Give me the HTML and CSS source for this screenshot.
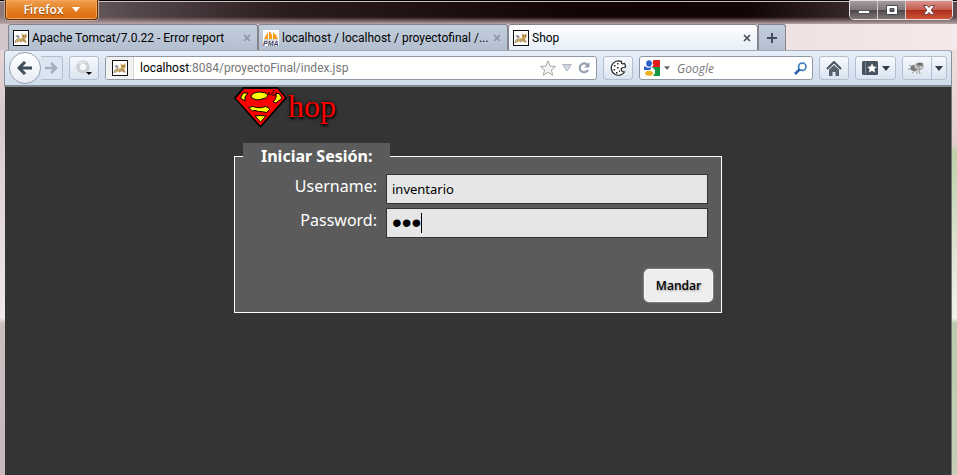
FILE: index.html
```html
<!DOCTYPE html>
<html lang="es">
<head>
<meta charset="utf-8">
<title>Shop</title>
<link rel="stylesheet" href="styles.css">
</head>
<body>
<svg class="defs" aria-hidden="true">
  <symbol id="cat" viewBox="0 0 16 16">
    <rect x=".5" y=".5" width="15" height="15" fill="#fff" stroke="#111"/>
    <path d="M2 6l3-1 2 2-2 1z" fill="#8d8d8d"/>
    <path d="M8.500 3l1.500 1.500h2L13.500 3v4.500L12 9l2 3.500h-2.500L9 11l-2.500.5-4 1.500L4 10l2.500-1.500L9 8z" fill="#cba55a"/>
    <path d="M2 13l1-3 3-2M7 12l2-1M10 9l2 3" fill="none" stroke="#8c8170"/>
    <path d="M10 6h1M12 6h1" stroke="#5b4520"/>
  </symbol>
  <symbol id="close" viewBox="0 0 8 8">
    <path d="M1 1l6 6M7 1L1 7" stroke="currentColor" stroke-width="1.7"/>
  </symbol>
  <symbol id="down" viewBox="0 0 8 5"><path d="M0 0h8L4 5z" fill="currentColor"/></symbol>
</svg>
<header class="browser">
  <div class="titlebar">
    <button class="firefox" type="button">Firefox <svg width="8" height="5"><use href="#down"/></svg></button>
    <div class="controls">
      <button type="button" aria-label="Minimizar"><svg width="12" height="12" viewBox="0 0 12 12"><path d="M.5 6.500h11v3H.5z" fill="#fff" stroke="#555"/></svg></button>
      <button type="button" aria-label="Maximizar"><svg width="12" height="12" viewBox="0 0 12 12"><path d="M.5 1.500h11v9H.5zM4 4.500v3h4v-3z" fill="#fff" stroke="#4b4b55" fill-rule="evenodd"/></svg></button>
      <button class="shut" type="button" aria-label="Cerrar"><svg width="12" height="12" viewBox="0 0 12 12"><path d="M.5 1.500h3.500l2 2 2-2h3.500L8.200 6l3.300 4.500H8l-2-2-2 2H.5L3.800 6z" fill="#fff" stroke="#6d4448"/></svg></button>
    </div>
  </div>
  <nav class="tabs">
    <a class="tab" href="#tomcat"><svg width="16" height="16"><use href="#cat"/></svg><span>Apache Tomcat/7.0.22 - Error report</span><svg class="x" width="8" height="8"><use href="#close"/></svg></a>
    <a class="tab" href="#pma"><svg width="16" height="16" viewBox="0 0 16 16"><path fill="#fff" d="M0 0h16v16H0z"/><path d="M1 9l4-7v7zM6 9V1q4 3 3 8zM10 9V2q4 3 5 7z" fill="#f69a18"/><path d="M1 10h14" stroke="#aab"/><text x="0" y="16" class="pma">PMA</text></svg><span>localhost / localhost / proyectofinal /...</span><svg class="x" width="8" height="8"><use href="#close"/></svg></a>
    <a class="tab active" href="#shop"><svg width="16" height="16"><use href="#cat"/></svg><span>Shop</span><svg class="x" width="8" height="8"><use href="#close"/></svg></a>
    <button class="newtab" type="button" aria-label="Nueva pestaña"><svg width="12" height="12" viewBox="0 0 12 12"><path d="M6 1v10M1 6h10" stroke="#3e4c5c" stroke-width="2"/></svg></button>
  </nav>
  <div class="toolbar">
    <div class="history">
      <button class="back" type="button" aria-label="Atrás"><svg width="16" height="14" viewBox="0 0 16 14"><path d="M8 1L2 7l6 6M3 7h12" fill="none" stroke="#3f4c5a" stroke-width="3"/></svg></button>
      <button class="forward" type="button" aria-label="Adelante"><svg width="13" height="12" viewBox="0 0 13 12"><path d="M6 1l5 5-5 5M0 6h10" fill="none" stroke="#a3b0c0" stroke-width="2.600"/></svg></button>
    </div>
    <button class="tool" type="button" aria-label="Complemento"><svg width="18" height="18" viewBox="0 0 18 18"><circle cx="8" cy="8" r="5" fill="#f4f6f8" stroke="#cdd1d6" stroke-width="3.500"/><path d="M4 5q3-3 6-1" fill="none" stroke="#e6e9ec" stroke-width="2"/><path d="M11 13h6l-3 3z" fill="#000"/></svg></button>
    <div class="urlbar">
      <span class="identity"><svg width="16" height="16"><use href="#cat"/></svg></span>
      <span class="url"><b>localhost</b>:8084/proyectoFinal/index.jsp</span>
      <svg width="16" height="16" viewBox="0 0 16 16"><path d="M8 .8l2.100 5.200 5.500.4-4.200 3.500 1.400 5.500L8 12.400l-4.800 3 1.400-5.500L.4 6.400 5.900 6z" fill="#f2f2f2" stroke="#a8a8a8"/></svg>
      <svg width="10" height="8" viewBox="0 0 10 8"><path d="M.7.700h8.600L5 7z" fill="#d5dbe3" stroke="#a5afbb"/></svg>
      <svg width="12" height="12" viewBox="0 0 12 12"><path d="M9.500 3A4.400 4.400 0 1 0 10 8" fill="none" stroke="#94a0ae" stroke-width="2.200"/><path d="M6 5.500h5.500V0z" fill="#94a0ae"/></svg>
    </div>
    <button class="tool" type="button" aria-label="Cookies"><svg width="17" height="17" viewBox="0 0 17 17"><path d="M11.500 1.500A7.200 7.200 0 1 0 14.500 12q-3 0-3.500-2.500.5-2 2.500-2l2-.5q0-2-1-3.500l-2 .5q-1.500-.5-1-2.500z" fill="#fff" stroke="#222" stroke-width="1.200"/><path d="M7 3h1.500v1.500H7zM4 5h1.500v1.500H4zM7 7h1.500v1.500H7zM3.500 9H5v1.500H3.500zM6 12h1.500v1.500H6zM9 10.500h1V12H9z" fill="#222"/></svg></button>
    <label class="search">
      <svg width="16" height="16" viewBox="0 0 16 16"><path fill="#fff" d="M0 0h8v16H0z"/><path fill="#e21b1b" d="M8 0h8v7H8z"/><path fill="#159947" d="M8 7h8v9H8z"/><path d="M8 0h1.500l-1 3 1 2-1.500 2 3 3v3l-2 3H8z" fill="#fff"/><ellipse cx="5" cy="3.500" rx="2.800" ry="3.300" fill="#2c62c8"/><path d="M0 6l4 2 4-1-2 3H0z" fill="#2c62c8"/><ellipse cx="5" cy="13.300" rx="4" ry="2.500" fill="#eeb321"/></svg>
      <svg class="small" width="6" height="4"><use href="#down"/></svg>
      <input type="text" placeholder="Google" aria-label="Buscar con Google">
      <svg width="13" height="13" viewBox="0 0 13 13"><circle cx="8.300" cy="4.700" r="3.700" fill="#fff" stroke="#3479c2" stroke-width="1.600"/><path d="M5.500 7.500L1 12" stroke="#285fae" stroke-width="2.500"/></svg>
    </label>
    <button class="tool" type="button" aria-label="Inicio"><svg width="16" height="15" viewBox="0 0 16 15"><path d="M1 8l7-7 7 7" fill="none" stroke="#46535f" stroke-width="2"/><path d="M3 8.500L8 4l5 4.500V15H9.500v-4h-3v4H3z" fill="#56636f"/></svg></button>
    <button class="tool wide" type="button" aria-label="Marcadores"><svg width="16" height="14" viewBox="0 0 16 14"><rect width="16" height="14" rx="1.500" fill="#46535f"/><path d="M3.500 1v12" stroke="#7c8995"/><path d="M10 2.500l1.500 3 3.300.4-2.400 2.200.6 3.400-3-1.700-3 1.700.6-3.400-2.400-2.200 3.300-.4z" fill="#fff"/></svg><svg width="8" height="5"><use href="#down"/></svg></button>
    <div class="split">
      <button type="button" aria-label="Firebug"><svg width="18" height="14" viewBox="0 0 18 14"><path d="M1 4l5 3M0 8h6M4 12l4-3M9 13V9M12 13l-1-4" stroke="#999" fill="none"/><ellipse cx="6" cy="7" rx="3.500" ry="3" fill="#777"/><ellipse cx="11" cy="5.500" rx="5" ry="3.700" fill="#a8a8a8"/><ellipse cx="12" cy="3" rx="3" ry="1.500" fill="#6f6f6f"/><path d="M6 3l4 5M12 6l4 1" stroke="#ddd"/></svg></button>
      <button type="button" aria-label="Opciones"><svg width="8" height="5"><use href="#down"/></svg></button>
    </div>
  </div>
</header>
<main class="page">
  <div class="content">
    <h1 class="logo">
      <svg width="54" height="42" viewBox="0 0 54 42" role="img" aria-label="S">
        <path d="M9 0h35l9 11-26.500 30L0 11z" fill="#000"/>
        <path d="M10 2h33.500l7.500 8.800-24.500 27.700L2 11.200z" fill="#f00"/>
        <path d="M9 6h5l-3 4v4L6.500 11z" fill="#ff0" stroke="#000"/>
        <path d="M17 9q2-4 9-4 6 0 8 3-1 4-6 4-4 2-8 0-3-1-3-3z" fill="#ff0" stroke="#000"/>
        <path d="M35 8V5M36 8q4-2 4-5M38 8h5l-1-3" fill="none" stroke="#000"/>
        <path d="M42 6.500h3l3 4.500-6 5-3-1q4-3 3-8.500z" fill="#ff0" stroke="#000"/>
        <path d="M14.500 20.500q5-2 8 0 5 1 9-1 4 1 4 3l-3 3q-4-1-8-1-4-2-6-.5z" fill="#ff0" stroke="#000"/>
        <path d="M21 29q5-1 11 0l-5.500 6z" fill="#ff0" stroke="#000"/>
      </svg><span>hop</span>
    </h1>
    <form>
      <fieldset>
        <legend>Iniciar Sesión:</legend>
        <div class="fields">
          <label for="user">Username:</label>
          <input id="user" type="text" value="inventario">
          <label for="pass">Password:</label>
          <div class="secret"><input id="pass" type="password" value="abc"><span class="caret"></span></div>
        </div>
        <div class="actions"><button class="send" type="button">Mandar</button></div>
      </fieldset>
    </form>
  </div>
</main>
</body>
</html>
```
FILE: styles.css
```css
* { box-sizing: border-box; }
body {
  margin: 0;
  min-height: 100vh;
  display: flex;
  flex-direction: column;
  font: 12px Roboto, sans-serif;
  color: #000;
  background:
    linear-gradient(#eee0e2, #d9c8cb 25%, #efe9ec 67%, #cdbdbf 68%, #c9b9bc) left / 50% 100% no-repeat,
    linear-gradient(#f5e6e6, #e7cdd0 30%, #bfd0a9 32%, #f0f3ee 67%, #bccbab 68%, #c4cfb4) right / 50% 100% no-repeat;
}
button, input { font: inherit; color: inherit; margin: 0; }
button { padding: 0; display: flex; align-items: center; justify-content: center; }
svg { flex: none; }
.defs { position: absolute; width: 0; height: 0; }

.titlebar {
  height: 24px;
  padding: 0 4px 0 5px;
  display: flex;
  justify-content: space-between;
  align-items: flex-start;
  background: linear-gradient(#000 1px, #cdbfc2 1px, #cdbfc2 2px, transparent 2px, transparent 17px, #b9a5a8 24px),
    linear-gradient(90deg, #8b7b7d, #54474a 14%, #2b1c1d 30%, #130406 60%, #120506 78%, #5b4b4d);
}
.firefox {
  width: 93px;
  height: 20px;
  gap: 8px;
  color: #fff;
  font-family: "Open Sans", sans-serif;
  font-weight: 600;
  text-shadow: 0 1px 1px #8a4303;
  border: 1px solid #5c3314;
  border-top: 0;
  border-radius: 0 0 4px 4px;
  box-shadow: 0 0 1px 1px #c9a68c, inset 0 0 0 1px #f5a55c;
  background: linear-gradient(#f0a050, #e27b1e 55%, #da6c12);
}
.controls {
  display: flex;
  height: 20px;
  border: 1px solid #eadfe0;
  border-radius: 0 0 5px 5px;
  overflow: hidden;
}
.controls button {
  width: 28px;
  border: 0;
  border-right: 1px solid #d7cccd;
  background: linear-gradient(#a69b9c, #80777a 48%, #4e4648 50%, #807678);
}
.controls .shut { width: 46px; border: 0; background: linear-gradient(#d9948b, #c65c4f 48%, #a82a18 50%, #cf5639); }

.tabs {
  height: 26px;
  padding-left: 8px;
  display: flex;
  background: linear-gradient(90deg, #d2c6ca, #eadddf 70%, #f6e9e9);
}
.tab {
  flex: 0 1 250px;
  min-width: 0;
  padding: 0 6px 0 4px;
  display: flex;
  align-items: center;
  gap: 3px;
  color: #000;
  text-decoration: none;
  white-space: nowrap;
  border: 1px solid #85838d;
  border-bottom: 0;
  border-radius: 3px 3px 0 0;
  background: linear-gradient(#c4cfdd, #b3bfd0);
}
.tab span { flex: 1; }
.tab .x { color: #8b96a5; }
.tab.active { background: linear-gradient(#fff, #e6eef8); }
.tab.active .x { color: #4b4f55; }
.pma { font: italic bold 7px "Liberation Sans", sans-serif; fill: #3d3d66; }
.newtab {
  width: 28px;
  border: 1px solid #85838d;
  border-bottom: 0;
  border-radius: 0 3px 0 0;
  background: linear-gradient(#c4cfdd, #b3bfd0);
}

.toolbar {
  height: 37px;
  margin: 0 5px 0 4px;
  padding: 0 4px;
  display: flex;
  align-items: center;
  gap: 6px;
  border: 1px solid #8b919b;
  border-top-color: #a3a9b3;
  border-bottom: 2px solid #84898f;
  border-radius: 3px 3px 0 0;
  background: linear-gradient(#e6eef8, #cfdcec);
}
.history { display: flex; align-items: center; }
.back {
  width: 32px;
  height: 32px;
  border: 1px solid #98a3b1;
  border-radius: 50%;
  background: linear-gradient(#fff, #e8edf4);
}
.forward {
  width: 22px;
  height: 24px;
  border: 1px solid #b3bfcf;
  border-left: 0;
  border-radius: 0 3px 3px 0;
  background: #dce6f1;
}
.tool, .split {
  width: 30px;
  height: 24px;
  border: 1px solid #b3bfcf;
  border-radius: 3px;
  background: linear-gradient(#f7fafd, #dae4f0);
}
.wide { width: 41px; gap: 4px; color: #333d47; }
.split { width: 45px; display: flex; color: #333d47; }
.split button { flex: 1; border: 0; background: none; }
.split button + button { flex: 0 0 15px; border-left: 1px solid #b3bfcf; }
.urlbar, .search {
  height: 24px;
  display: flex;
  align-items: center;
  background: #fff;
  border: 1px solid #8f98a5;
  border-radius: 3px;
}
.urlbar { flex: 1; gap: 6px; padding-right: 6px; }
.identity {
  align-self: stretch;
  width: 28px;
  display: flex;
  align-items: center;
  justify-content: center;
  background: #f1f1f1;
  border-right: 1px solid #d8d8d8;
  border-radius: 2px 0 0 2px;
}
.url { flex: 1; color: #777; white-space: nowrap; }
.url b { font-weight: 400; color: #000; }
.search { width: 174px; padding: 0 5px 0 4px; gap: 4px; }
.search .small { color: #666; }
.search input {
  flex: 1;
  min-width: 0;
  padding: 0 0 0 3px;
  border: 0;
  outline: 0;
  background: none;
  font-family: "Open Sans", sans-serif;
  font-style: italic;
}
.search input::placeholder { color: #777; }

.page {
  flex: 1;
  margin: 0 5px;
  background: #343434;
  border-right: 1px solid #777;
}
.content { width: 488px; max-width: 100%; margin: 0 auto; }
.logo {
  height: 56px;
  margin: 0;
  display: flex;
  font: 32px/38px "Liberation Serif", serif;
  color: #f00;
  text-shadow: 0 0 3px #000, 1px 2px 3px #000;
}
form { font-family: "Noto Sans", sans-serif; font-size: 16px; color: #fff; }
fieldset {
  min-width: 0;
  margin: 0;
  padding: 4px 8px 10px;
  border: 1px solid #fff;
  background: #5b5b5b;
}
legend {
  padding: 0 18px;
  line-height: 27px;
  font-weight: 700;
  background: #5b5b5b;
}
.fields {
  display: grid;
  grid-template-columns: 134px 1fr;
  gap: 4px 9px;
  padding-right: 5px;
}
.fields label { text-align: right; line-height: 24px; }
.fields input {
  display: block;
  width: 100%;
  height: 30px;
  padding: 0 5px;
  font-size: 13px;
  color: #000;
  background: #e6e6e6;
  border: 1px solid #333;
  border-radius: 0;
  outline: 0;
}
.secret { position: relative; }
.fields .secret input { font: 28px "Liberation Sans", sans-serif; }
.caret { position: absolute; left: 35px; top: 5px; width: 1px; height: 20px; background: #000; }
.actions { display: flex; justify-content: flex-end; padding-top: 31px; }
.send {
  width: 69px;
  height: 33px;
  font-family: "Open Sans", sans-serif;
  font-size: 12px;
  font-weight: 600;
  color: #000;
  text-shadow: 1px 1px 2px #999;
  background: #eee;
  border: 1px solid #f8f8f8;
  border-radius: 5px;
  box-shadow: 0 0 2px #ccc;
}
```
